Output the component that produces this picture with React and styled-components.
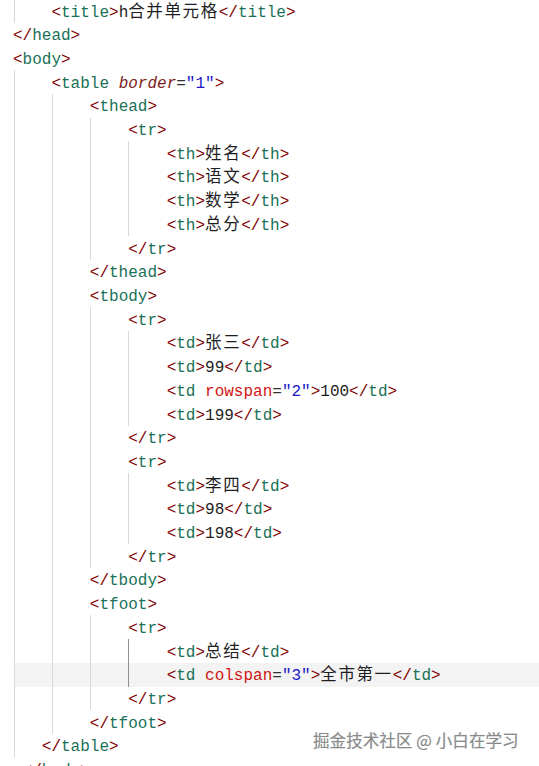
import React from "react";
import styled, { createGlobalStyle } from "styled-components";

const Global = createGlobalStyle`
  html, body { margin: 0; padding: 0; background: #ffffff; }
`;

const LINE_H = 23.71;
const GUIDE_X = [14, 52, 90, 128];

const Page = styled.div`
  position: relative;
  width: 539px;
  height: 766px;
  overflow: hidden;
  background: #ffffff;
`;

const Editor = styled.div`
  margin-top: -0.85px;
  font-family: "Liberation Mono", "Noto Sans CJK SC", monospace;
  font-size: 16px;
  color: #1e1e1e;
`;

const guideBg = ({ $guides, $active, $current }) => {
  const imgs = [];
  const pos = [];
  const sizes = [];
  $guides.forEach((g) => {
    const c = $active === g ? "#8f8f8f" : "#d9d9d9";
    imgs.push(`linear-gradient(${c}, ${c})`);
    pos.push(`${GUIDE_X[g]}px 0`);
    sizes.push("1px 100%");
  });
  if ($current) {
    imgs.push("linear-gradient(#f3f3f3, #f3f3f3)");
    pos.push("15px 0");
    sizes.push("100% 100%");
  }
  if (!imgs.length) return "background: none;";
  return `
    background-image: ${imgs.join(", ")};
    background-position: ${pos.join(", ")};
    background-size: ${sizes.join(", ")};
    background-repeat: no-repeat;
  `;
};

const Line = styled.div`
  box-sizing: border-box;
  height: ${LINE_H}px;
  padding-top: 2.4px;
  line-height: ${LINE_H}px;
  white-space: pre;
  padding-left: 13px;
  ${guideBg}
`;

const Bracket = styled.span`
  color: #800000;
`;
const Tag = styled.span`
  color: #1a7158;
`;
const Attr = styled.span`
  color: ${(p) => (p.$old ? "#7e1d1d" : "#d21414")};
  font-style: ${(p) => (p.$old ? "italic" : "normal")};
`;
const Eq = styled.span`
  color: #303030;
`;
const Str = styled.span`
  color: #1818c8;
`;
const Text = styled.span`
  color: #1e1e1e;
`;
const Cjk = styled.span`
  font-family: "Noto Sans CJK SC", sans-serif;
  font-size: 16.5px;
  line-height: 1;
  letter-spacing: 1.6px;
  color: #1e1e1e;
`;

const Watermark = styled.div`
  position: absolute;
  left: 313px;
  top: 728px;
  font-family: "Noto Sans CJK SC", sans-serif;
  font-size: 16.6px;
  line-height: 24px;
  color: #8a8a8a;
  text-shadow: 1px 1px 0 rgba(255, 255, 255, 0.9), 0 0 1px rgba(0, 0, 0, 0.25);
  white-space: pre;
`;

const CODE = [
  ["    <title>h合并单元格</title>", [0]],
  ["</head>", []],
  ["<body>", []],
  ['    <table border="1">', [0]],
  ["        <thead>", [0, 1]],
  ["            <tr>", [0, 1, 2]],
  ["                <th>姓名</th>", [0, 1, 2, 3]],
  ["                <th>语文</th>", [0, 1, 2, 3]],
  ["                <th>数学</th>", [0, 1, 2, 3]],
  ["                <th>总分</th>", [0, 1, 2, 3]],
  ["            </tr>", [0, 1, 2]],
  ["        </thead>", [0, 1]],
  ["        <tbody>", [0, 1]],
  ["            <tr>", [0, 1, 2]],
  ["                <td>张三</td>", [0, 1, 2, 3]],
  ["                <td>99</td>", [0, 1, 2, 3]],
  ['                <td rowspan="2">100</td>', [0, 1, 2, 3]],
  ["                <td>199</td>", [0, 1, 2, 3]],
  ["            </tr>", [0, 1, 2]],
  ["            <tr>", [0, 1, 2]],
  ["                <td>李四</td>", [0, 1, 2, 3]],
  ["                <td>98</td>", [0, 1, 2, 3]],
  ["                <td>198</td>", [0, 1, 2, 3]],
  ["            </tr>", [0, 1, 2]],
  ["        </tbody>", [0, 1]],
  ["        <tfoot>", [0, 1]],
  ["            <tr>", [0, 1, 2]],
  ["                <td>总结</td>", [0, 1, 2, 3], 3],
  ['                <td colspan="3">全市第一</td>', [0, 1, 2, 3], 3, true],
  ["            </tr>", [0, 1, 2]],
  ["        </tfoot>", [0, 1]],
  ["   </table>", [0]],
  [" </body>", []],
];

function tokenize(s) {
  const out = [];
  let rest = s;
  let inTag = false;
  const take = (re) => {
    const m = rest.match(re);
    if (!m) return null;
    rest = rest.slice(m[0].length);
    return m[0];
  };
  let guard = 0;
  while (rest.length && guard++ < 200) {
    let t;
    if (!inTag) {
      if ((t = take(/^<\/?/))) {
        out.push(["b", t]);
        const name = take(/^[a-zA-Z0-9]+/);
        if (name) out.push(["tag", name]);
        inTag = true;
      } else if ((t = take(/^[^<]+/))) {
        out.push(["text", t]);
      }
    } else {
      if ((t = take(/^>/))) {
        out.push(["b", t]);
        inTag = false;
      } else if ((t = take(/^\s+/))) {
        out.push(["text", t]);
      } else if ((t = take(/^[a-zA-Z-]+/))) {
        out.push(["attr", t]);
      } else if ((t = take(/^=/))) {
        out.push(["eq", t]);
      } else if ((t = take(/^"[^"]*"/))) {
        out.push(["str", t]);
      } else {
        out.push(["text", rest[0]]);
        rest = rest.slice(1);
      }
    }
  }
  return out;
}

function renderText(str, key) {
  const parts = str.split(/([\u4e00-\u9fff]+)/).filter((p) => p.length);
  return parts.map((p, i) =>
    /[\u4e00-\u9fff]/.test(p) ? (
      <Cjk key={`${key}-${i}`}>{p}</Cjk>
    ) : (
      <Text key={`${key}-${i}`}>{p}</Text>
    )
  );
}

function CodeLine({ src }) {
  const toks = tokenize(src);
  return toks.map(([k, v], i) => {
    switch (k) {
      case "b":
        return <Bracket key={i}>{v}</Bracket>;
      case "tag":
        return <Tag key={i}>{v}</Tag>;
      case "attr":
        return (
          <Attr key={i} $old={v === "border"}>
            {v}
          </Attr>
        );
      case "eq":
        return <Eq key={i}>{v}</Eq>;
      case "str":
        return <Str key={i}>{v}</Str>;
      default:
        return renderText(v, i);
    }
  });
}

export default function App() {
  return (
    <Page>
      <Global />
      <Editor>
        {CODE.map(([src, guides, active, current], i) => (
          <Line key={i} $guides={guides} $active={active} $current={!!current}>
            <CodeLine src={src} />
          </Line>
        ))}
      </Editor>
      <Watermark>掘金技术社区 @ 小白在学习</Watermark>
    </Page>
  );
}
